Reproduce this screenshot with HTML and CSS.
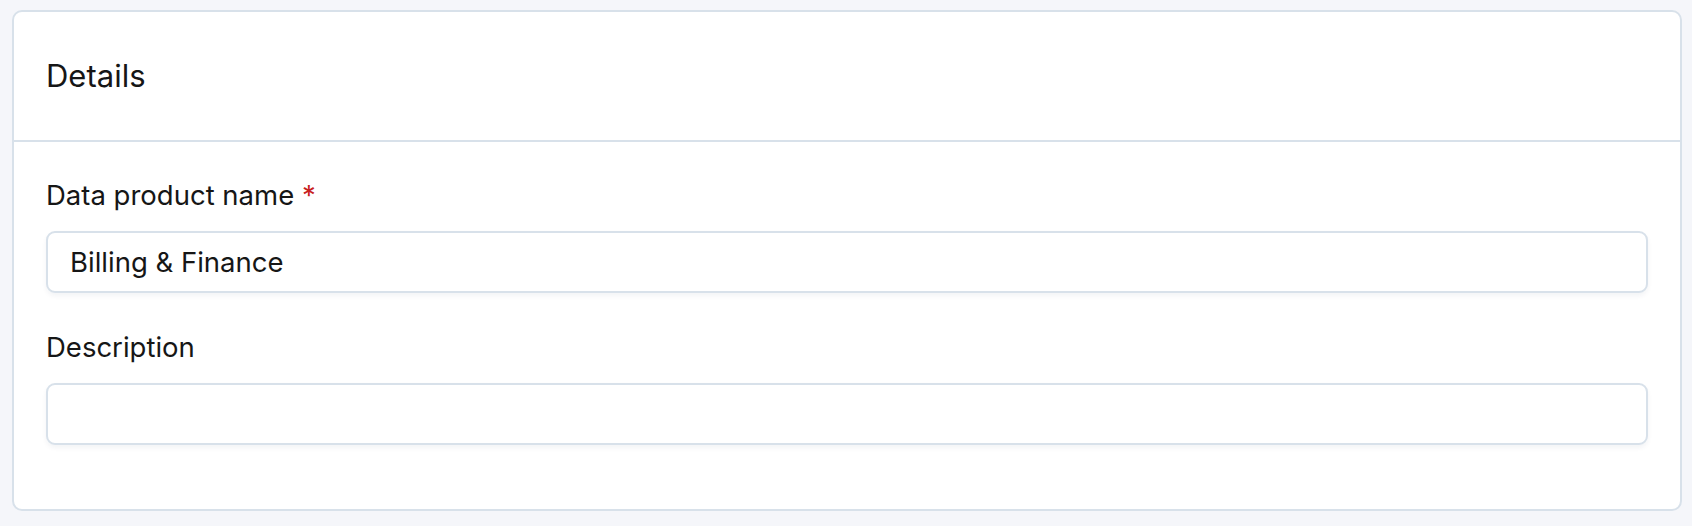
FILE: index.html
```html
<!DOCTYPE html>
<html lang="en">
<head>
<meta charset="utf-8">
<title>Details</title>
<link rel="stylesheet" href="styles.css">
</head>
<body>
  <section class="card">
    <header class="card-header">
      <h2 class="card-title">Details</h2>
    </header>
    <div class="card-body">
      <div class="field">
        <label class="field-label" for="name">Data product name <span class="required">*</span></label>
        <input class="field-input" id="name" type="text" value="Billing &amp; Finance">
      </div>
      <div class="field">
        <label class="field-label" for="desc">Description</label>
        <input class="field-input" id="desc" type="text" value="">
      </div>
    </div>
  </section>
</body>
</html>
```
FILE: styles.css
```css
* { box-sizing: border-box; }

html, body {
  margin: 0;
  padding: 0;
}

body {
  background: #f5f6fa;
  font-family: Inter, "Noto Sans", "Liberation Sans", sans-serif;
  color: #161616;
  padding: 10px 10px 15px 12px;
}

.card {
  width: 1670px;
  height: 501px;
  background: #ffffff;
  border: 2px solid #d8e1ea;
  border-radius: 10px;
  display: flex;
  flex-direction: column;
}

.card-header {
  height: 130px;
  display: flex;
  align-items: center;
  padding: 0 32px;
  border-bottom: 2px solid #d8e1ea;
  flex: none;
}

.card-title {
  margin: 0;
  font-size: 31px;
  line-height: 36px;
  font-weight: 400;
  color: #161616;
}

.card-body {
  padding: 37px 32px 64px 32px;
  display: flex;
  flex-direction: column;
  gap: 38px;
}

.field {
  display: flex;
  flex-direction: column;
  gap: 20px;
}

.field-label {
  font-size: 27.5px;
  line-height: 32px;
  font-weight: 400;
  color: #161616;
}

.required {
  color: #c8201e;
}

.field-input {
  width: 100%;
  height: 62px;
  border: 2px solid #d8e1ea;
  border-radius: 9px;
  background: #ffffff;
  box-shadow: 0 3px 5px rgba(20, 40, 80, 0.05);
  padding: 0 22px;
  font-family: inherit;
  font-size: 27.5px;
  color: #161616;
  outline: none;
}
```
